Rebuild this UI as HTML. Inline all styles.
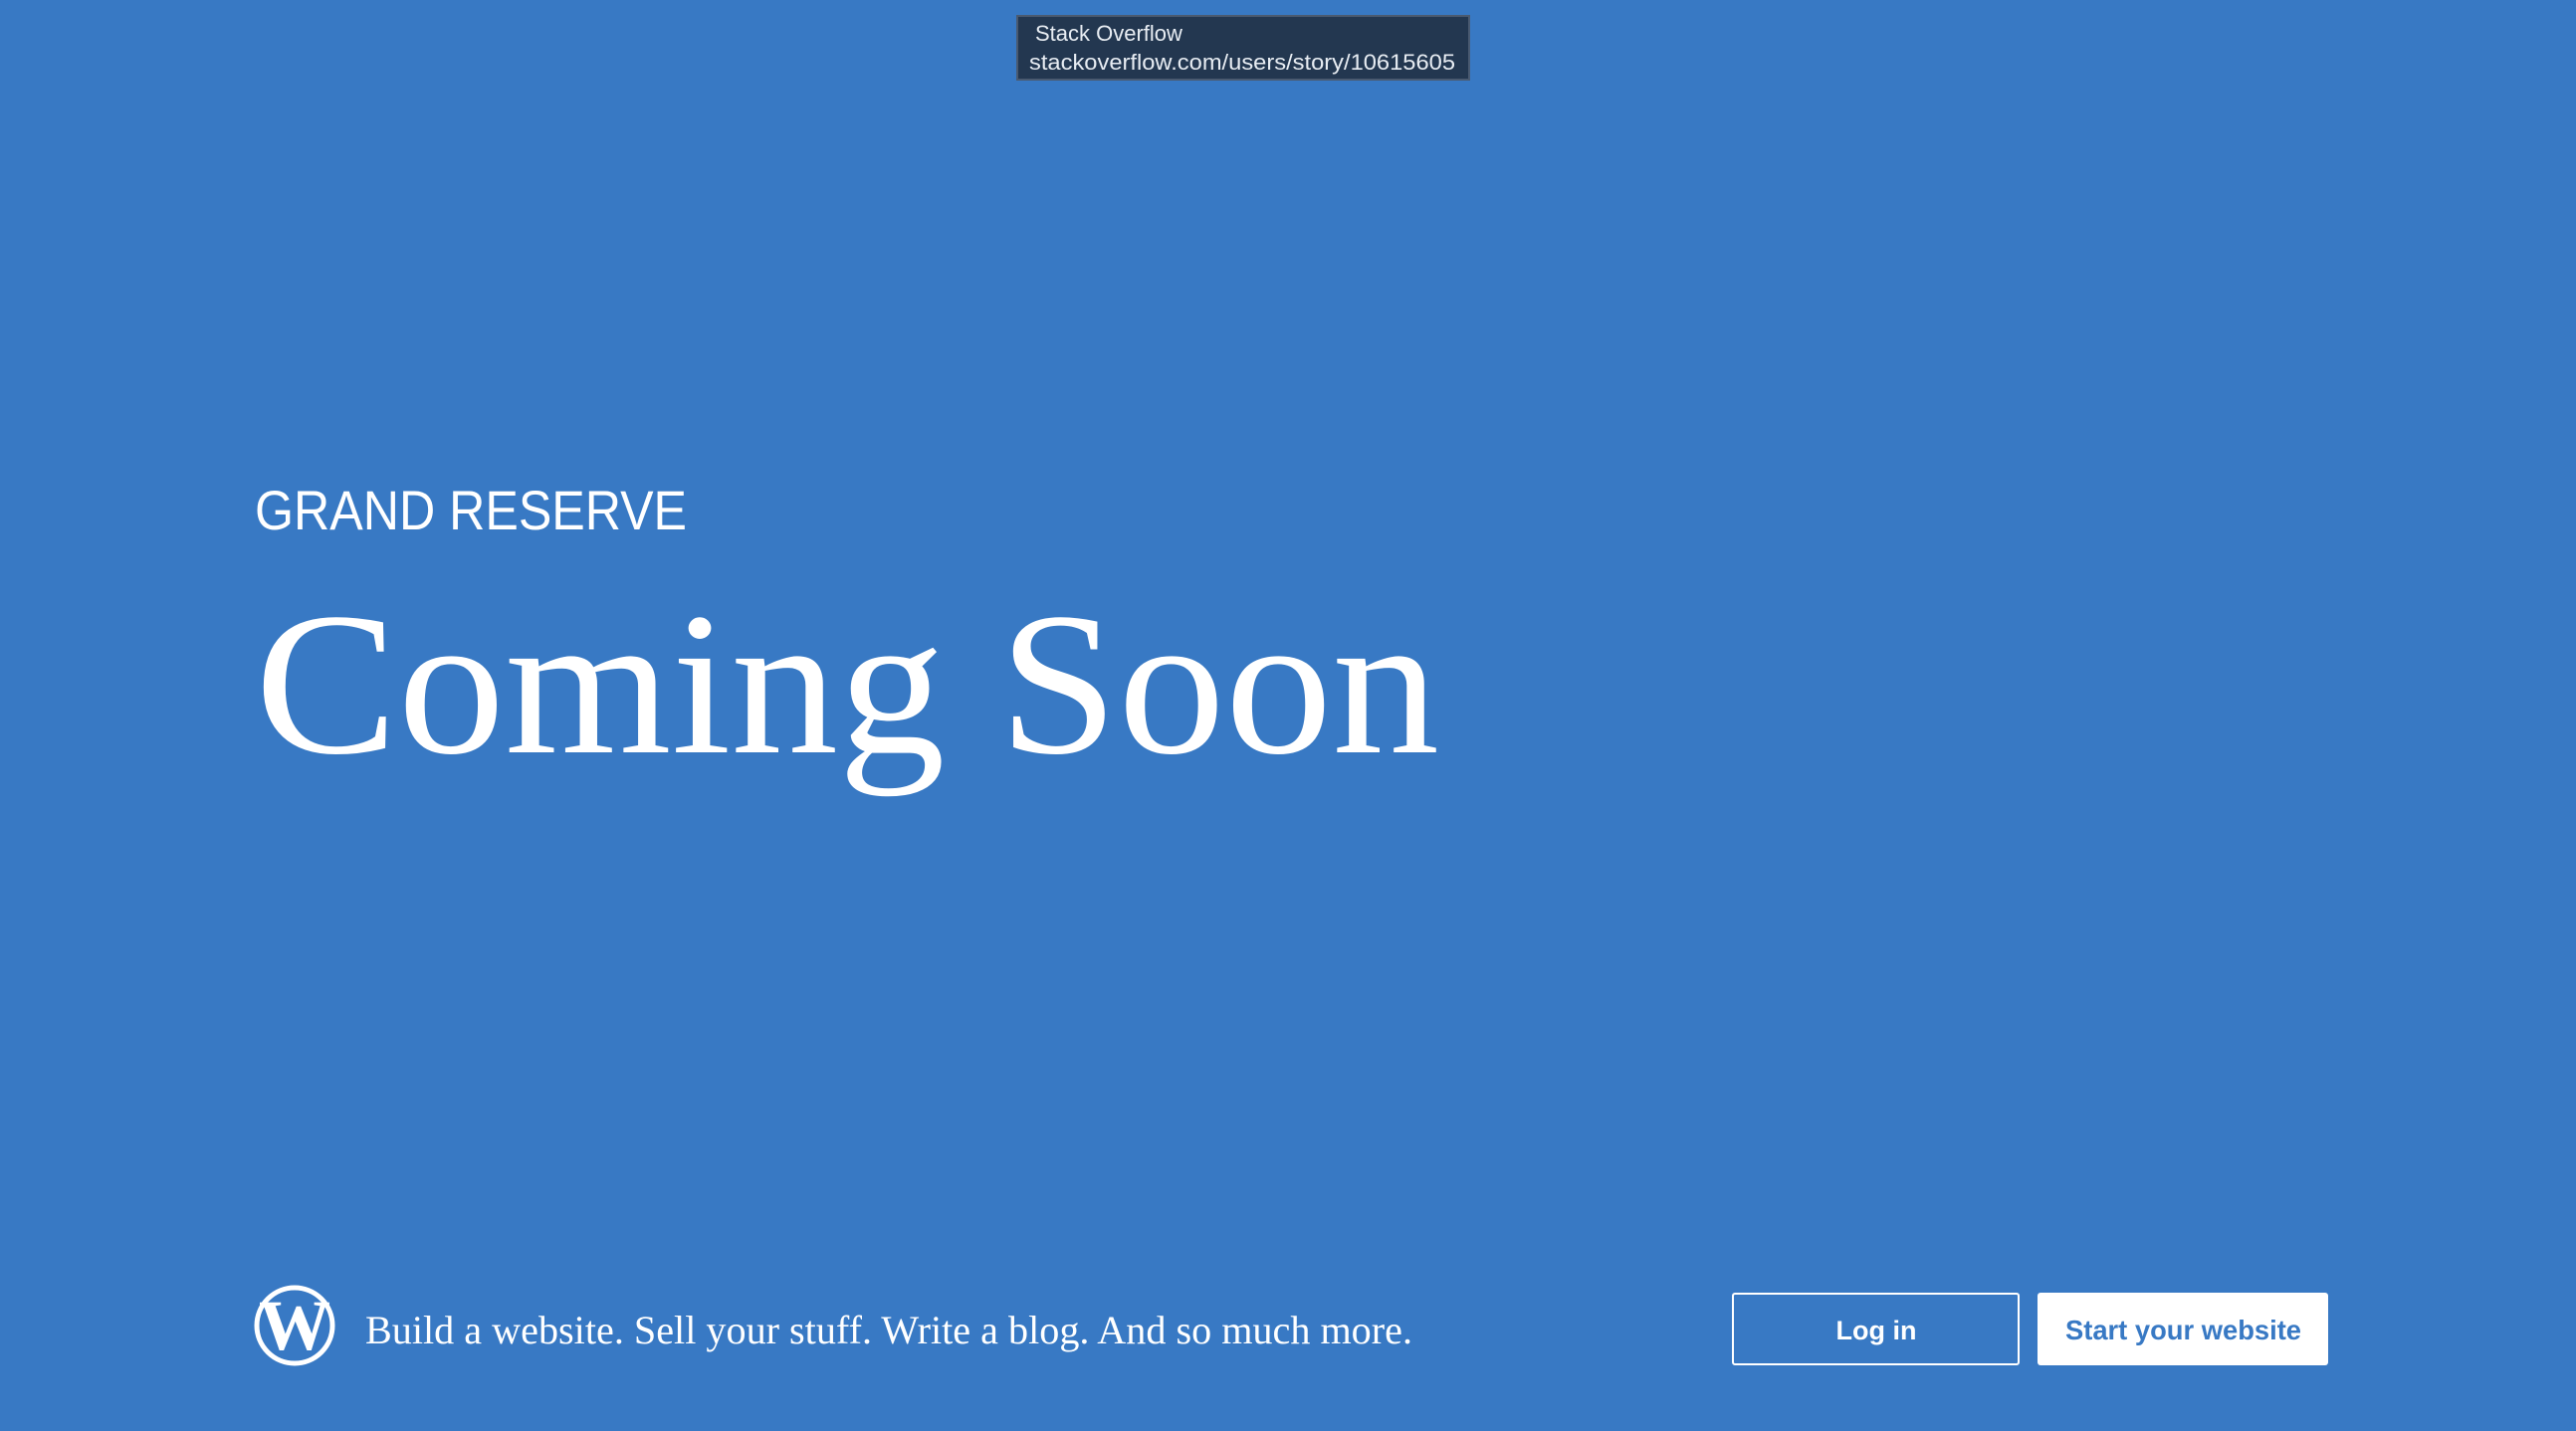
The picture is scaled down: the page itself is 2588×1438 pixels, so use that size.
<!DOCTYPE html>
<html><head><meta charset="utf-8"><style>
html,body{margin:0;padding:0;background:#3879c4;width:2588px;height:1438px;overflow:hidden}
svg{position:absolute;left:0;top:0}
</style></head><body>
<svg width="2588" height="1438" viewBox="0 0 2588 1438" xmlns="http://www.w3.org/2000/svg">
<rect width="2588" height="1438" fill="#3879c4"/>
<rect x="1022" y="16" width="454" height="64" fill="#233750" stroke="#4a5a70" stroke-width="2"/>
<text x="1040" y="41" font-family="Liberation Sans, sans-serif" font-size="22" fill="#e8edf3">Stack Overflow</text>
<text x="1034" y="70" font-family="Liberation Sans, sans-serif" font-size="22" fill="#e8edf3" textLength="428" lengthAdjust="spacingAndGlyphs">stackoverflow.com/users/story/10615605</text>
<text x="256" y="532" font-family="Liberation Sans, sans-serif" font-size="56" fill="#fff" textLength="434" lengthAdjust="spacingAndGlyphs">GRAND RESERVE</text>
<text x="256" y="756" font-family="Liberation Serif, serif" font-size="205" fill="#fff" textLength="1190" lengthAdjust="spacingAndGlyphs">Coming Soon</text>
<g transform="translate(296,1332)">
<circle r="38" fill="none" stroke="#fff" stroke-width="5"/>
<text x="0" y="24" text-anchor="middle" font-family="Liberation Serif, serif" font-weight="bold" font-size="72" fill="#fff">W</text>
</g>
<text x="367" y="1350" font-family="Liberation Serif, serif" font-size="40" fill="#fff" textLength="1052" lengthAdjust="spacingAndGlyphs">Build a website. Sell your stuff. Write a blog. And so much more.</text>
<rect x="1741" y="1300" width="287" height="71" rx="2" fill="none" stroke="#fff" stroke-width="2"/>
<text x="1885" y="1346" text-anchor="middle" font-family="Liberation Sans, sans-serif" font-weight="bold" font-size="27" fill="#fff">Log in</text>
<rect x="2047" y="1299" width="292" height="73" rx="3" fill="#fff"/>
<text x="2075" y="1346" font-family="Liberation Sans, sans-serif" font-weight="bold" font-size="28" fill="#3879c4" textLength="237" lengthAdjust="spacingAndGlyphs">Start your website</text>
</svg>
</body></html>
